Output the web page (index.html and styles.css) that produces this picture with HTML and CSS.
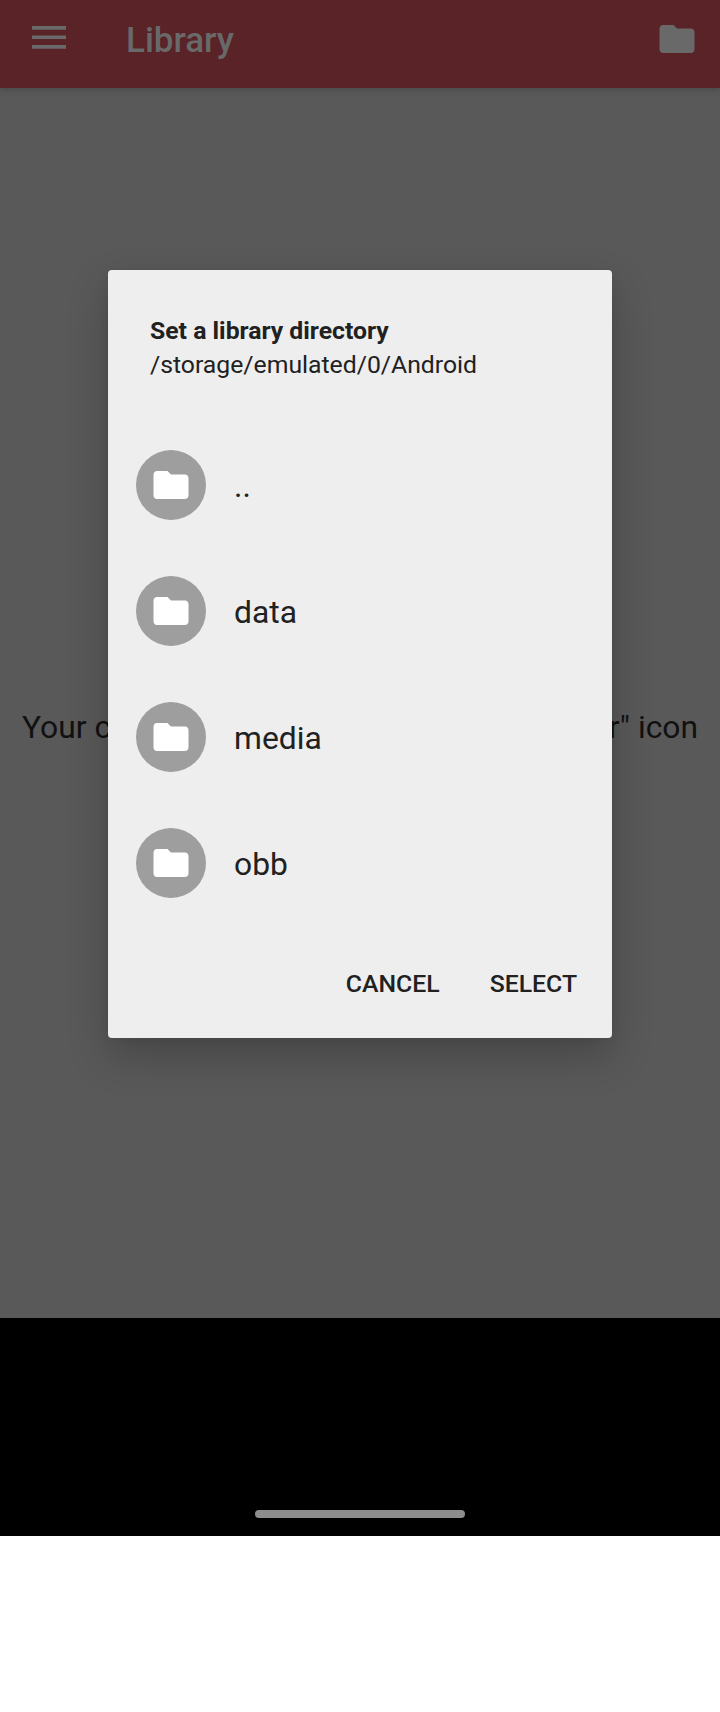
FILE: index.html
```html
<!DOCTYPE html>
<html lang="en">
<head>
<meta charset="utf-8">
<title>Library</title>
<link rel="stylesheet" href="styles.css">
</head>
<body>
<svg width="0" height="0" class="defs"><symbol id="folder" viewBox="0 0 24 24"><path d="M10 4H4c-1.1 0-1.99.9-1.99 2L2 18c0 1.1.9 2 2 2h16c1.1 0 2-.9 2-2V8c0-1.1-.9-2-2-2h-8l-2-2z"/></symbol></svg>
<div class="screen">
  <header class="appbar">
    <svg class="menu" viewBox="0 0 34 24"><path d="M0 0h34v3.7H0zM0 9.4h34v3.7H0zM0 19h34v3.7H0z"/></svg>
    <h1 class="heading">Library</h1>
    <svg class="folder"><use href="#folder"/></svg>
  </header>
  <main class="content">
    <p class="empty"><span>Your c</span><span>r" icon</span></p>
  </main>
  <footer class="navbar"><div class="handle"></div></footer>
  <section class="dialog" role="dialog">
    <div class="dialog-head">
      <h2 class="title">Set a library directory</h2>
      <p class="path">/storage/emulated/0/Android</p>
    </div>
    <ul class="list">
      <li class="row"><span class="avatar"><svg class="folder"><use href="#folder"/></svg></span><span class="name">..</span></li>
      <li class="row"><span class="avatar"><svg class="folder"><use href="#folder"/></svg></span><span class="name">data</span></li>
      <li class="row"><span class="avatar"><svg class="folder"><use href="#folder"/></svg></span><span class="name">media</span></li>
      <li class="row"><span class="avatar"><svg class="folder"><use href="#folder"/></svg></span><span class="name">obb</span></li>
    </ul>
    <div class="actions"><span class="action">CANCEL</span><span class="action">SELECT</span></div>
  </section>
</div>
</body>
</html>
```
FILE: styles.css
```css
* { box-sizing: border-box; margin: 0; padding: 0; }
body { background: #fff; font-family: Roboto, sans-serif; color: #212121; height: 1712px; }
.defs { position: absolute; }
.screen { position: relative; width: 720px; height: 1536px; display: flex; flex-direction: column; background: #595959; }
.appbar { height: 88px; display: flex; align-items: flex-start; padding: 0 22px 0 32px; background: #592328; box-shadow: 0 2px 6px rgba(0,0,0,.18); fill: #696969; color: #696969; z-index: 1; }
.menu { width: 34px; height: 24px; margin-top: 26px; }
.heading { font-size: 35px; line-height: 42px; font-weight: 500; margin: 20px auto 0 60px; }
.folder { display: block; width: 42px; height: 42px; }
.appbar .folder { margin-top: 18px; }
.content { height: 1230px; padding-top: 616px; }
.empty { display: flex; justify-content: space-between; padding: 0 22px; font-size: 31.8px; line-height: 46px; color: #111; }
.navbar { height: 218px; background: #000; display: flex; justify-content: center; align-items: flex-end; padding-bottom: 18px; }
.handle { width: 210px; height: 8px; border-radius: 4px; background: #8d8d8d; }
.dialog { position: absolute; left: 108px; top: 270px; width: 504px; height: 768px; background: #eee; border-radius: 4px; box-shadow: 0 18px 40px rgba(0,0,0,.22), 0 2px 10px rgba(0,0,0,.04); z-index: 2; }
.dialog-head { height: 152px; padding: 44px 42px 0; font-size: 24.75px; line-height: 34px; }
.title { font-size: inherit; font-weight: 700; }
.list { list-style: none; }
.row { height: 126px; display: flex; align-items: center; padding: 0 28px; gap: 28px; }
.avatar { width: 70px; height: 70px; border-radius: 50%; background: #9e9e9e; fill: #fff; display: flex; align-items: center; justify-content: center; }
.name { font-size: 31.8px; line-height: 38px; padding-top: 2px; }
.actions { display: flex; justify-content: flex-end; gap: 50px; padding: 43px 35px 0; font-size: 24.8px; line-height: 30px; font-weight: 500; }
```
